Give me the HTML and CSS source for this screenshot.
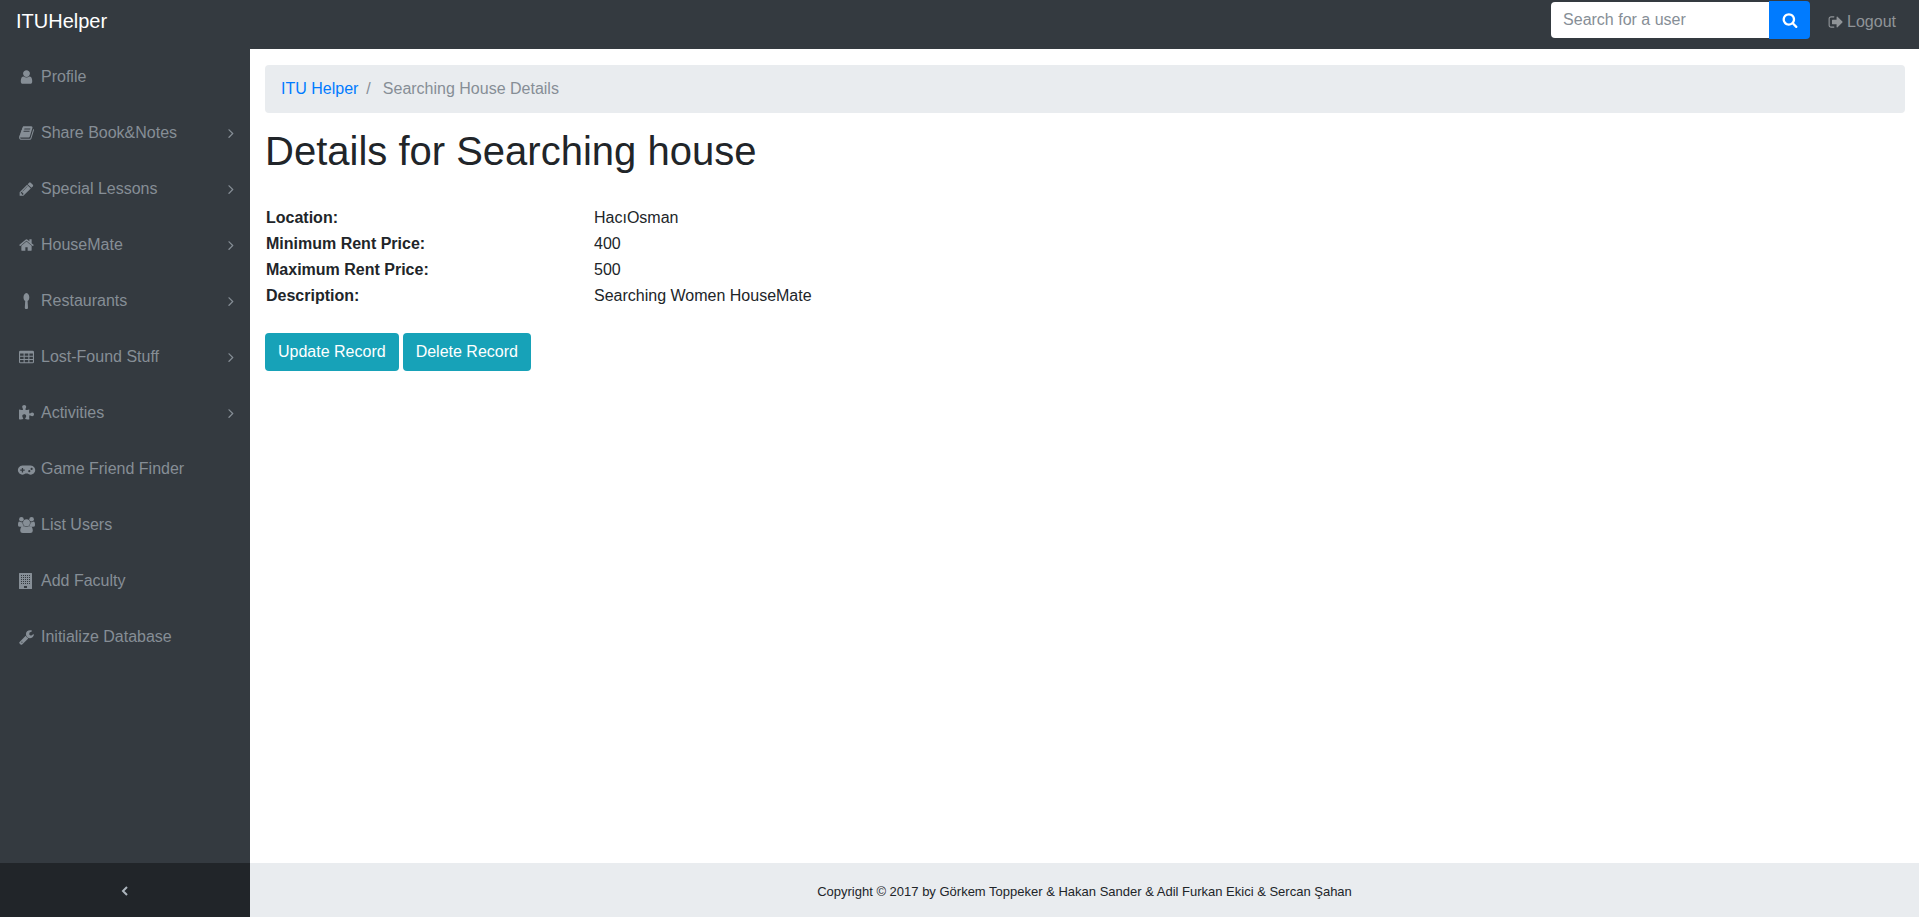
FILE: index.html
```html
<!DOCTYPE html>
<html lang="en">
<head>
<meta charset="utf-8">
<meta name="viewport" content="width=device-width, initial-scale=1">
<title>ITUHelper - Searching House Details</title>
<link rel="stylesheet" href="styles.css">
</head>
<body>
<svg class="sprite" aria-hidden="true">
  <symbol id="angle-right" viewBox="0 0 1792 1792"><path d="M1171 960q0 13-10 23l-466 466q-10 10-23 10t-23-10l-50-50q-10-10-10-23t10-23l393-393-393-393q-10-10-10-23t10-23l50-50q10-10 23-10t23 10l466 466q10 10 10 23z"/></symbol>
</svg>

<header class="navbar">
  <a class="brand" href="#">ITUHelper</a>
  <div class="navbar-right">
    <form class="search">
      <input class="search-input" type="text" placeholder="Search for a user" aria-label="Search for a user">
      <button class="search-button" type="button" aria-label="Search">
        <svg class="icon" viewBox="0 0 1792 1792"><path d="M1216 832q0-185-131.5-316.5t-316.5-131.5-316.5 131.5-131.5 316.5 131.5 316.5 316.5 131.5 316.5-131.5 131.5-316.5zm512 832q0 52-38 90t-90 38q-54 0-90-38l-343-342q-179 124-399 124-143 0-273.5-55.5t-225-150-150-225-55.5-273.5 55.5-273.5 150-225 225-150 273.5-55.5 273.5 55.5 225 150 150 225 55.5 273.5q0 220-124 399l343 343q37 37 37 90z"/></svg>
      </button>
    </form>
    <a class="logout" href="#">
      <svg class="icon" viewBox="0 0 1792 1792"><path d="M704 1440q0 4 1 20t.5 26.5-3 23.5-10 19.5-20.5 6.5h-320q-119 0-203.5-84.5t-84.5-203.5v-704q0-119 84.5-203.5t203.5-84.5h320q13 0 22.5 9.5t9.5 22.5q0 4 1 20t.5 26.5-3 23.5-10 19.5-20.5 6.5h-320q-66 0-113 47t-47 113v704q0 66 47 113t113 47h312l11.5 1 11.5 3 8 5.5 7 9 2 13.5zm928-544q0 26-19 45l-544 544q-19 19-45 19t-45-19-19-45v-288h-448q-26 0-45-19t-19-45v-384q0-26 19-45t45-19h448v-288q0-26 19-45t45-19 45 19l544 544q19 19 19 45z"/></svg>
      <span>Logout</span>
    </a>
  </div>
</header>

<div class="layout">
  <nav class="sidebar" aria-label="Main">
    <ul class="side-list">
      <li><a class="side-link" href="#">
        <svg class="side-icon" viewBox="0 0 1792 1792"><path d="M1536 1399q0 109-62.5 187t-150.5 78h-854q-88 0-150.5-78t-62.5-187q0-85 8.5-160.5t31.5-152 58.5-131 94-89 134.5-34.5q131 128 313 128t313-128q76 0 134.5 34.5t94 89 58.5 131 31.5 152 8.5 160.5zm-256-887q0 159-112.5 271.5t-271.5 112.5-271.5-112.5-112.5-271.5 112.5-271.5 271.5-112.5 271.5 112.5 112.5 271.5z"/></svg>
        <span>Profile</span></a></li>
      <li><a class="side-link" href="#">
        <svg class="side-icon" viewBox="0 0 1792 1792"><path d="M1703 478q40 57 18 129l-275 906q-19 64-76.5 107.5t-122.5 43.5h-923q-77 0-148.5-53.5t-99.5-131.5q-24-67-2-127 0-4 3-27t4-37q1-8-3-21.5t-3-19.5q2-11 8-21t16.5-23.5 16.5-23.5q23-38 45-91.5t30-91.5q3-10 .5-30t-.5-28q3-11 17-28t17-23q21-36 42-92t25-90q1-9-2.5-32t.5-28q4-13 22-30.5t22-22.5q19-26 42.5-84.5t27.5-96.5q1-8-3-25.5t-2-26.5q2-8 9-18t18-23 17-21q8-12 16.5-30.5t15-35 16-36 19.5-32 26.5-23.5 36-11.5 47.5 5.5l-1 3q38-9 51-9h761q74 0 114 56t18 130l-274 906q-36 119-71.5 153.5t-128.5 34.5h-869q-27 0-38 15-11 16-1 43 24 70 144 70h923q29 0 56-15.5t35-41.5l300-987q7-22 5-57 38 15 59 43zm-1064 2q-4 13 2 22.5t20 9.5h608q13 0 25.5-9.5t16.5-22.5l21-64q4-13-2-22.5t-20-9.5h-608q-13 0-25.5 9.5t-16.5 22.5zm-83 256q-4 13 2 22.5t20 9.5h608q13 0 25.5-9.5t16.5-22.5l21-64q4-13-2-22.5t-20-9.5h-608q-13 0-25.5 9.5t-16.5 22.5z"/></svg>
        <span>Share Book&amp;Notes</span><svg class="arrow"><use href="#angle-right"/></svg></a></li>
      <li><a class="side-link" href="#">
        <svg class="side-icon" viewBox="0 0 1792 1792"><path d="M491 1536l91-91-235-235-91 91v107h128v128h107zm523-928q0-22-22-22-10 0-17 7l-542 542q-7 7-7 17 0 22 22 22 10 0 17-7l542-542q7-7 7-17zm-54-192l416 416-832 832h-416v-416zm683 96q0 53-37 90l-166 166-416-416 166-165q36-38 90-38 53 0 91 38l235 234q37 39 37 91z"/></svg>
        <span>Special Lessons</span><svg class="arrow"><use href="#angle-right"/></svg></a></li>
      <li><a class="side-link" href="#">
        <svg class="side-icon" viewBox="0 0 1792 1792"><path d="M1472 992v480q0 26-19 45t-45 19h-384v-384h-256v384h-384q-26 0-45-19t-19-45v-480q0-1 .5-3t.5-3l575-474 575 474q1 2 1 6zm223-69l-62 74q-8 9-21 11h-3q-13 0-21-7l-692-577-692 577q-12 8-24 7-13-2-21-11l-62-74q-8-10-7-23.5t11-21.5l719-599q32-26 76-26t76 26l244 204v-195q0-14 9-23t23-9h192q14 0 23 9t9 23v408l219 182q10 8 11 21.5t-7 23.5z"/></svg>
        <span>HouseMate</span><svg class="arrow"><use href="#angle-right"/></svg></a></li>
      <li><a class="side-link" href="#">
        <svg class="side-icon" viewBox="0 0 21 16"><path d="M10.400 0C12.200 0 13.300 2.300 13.300 4.300C13.300 6.300 12.600 7.500 11.600 8L12 14.800Q12 16 10.900 16H9.900Q8.800 16 8.800 14.800L9.200 8C8.200 7.500 7.500 6.300 7.500 4.300C7.500 2.300 8.600 0 10.400 0Z"/></svg>
        <span>Restaurants</span><svg class="arrow"><use href="#angle-right"/></svg></a></li>
      <li><a class="side-link" href="#">
        <svg class="side-icon" viewBox="0 0 21 16"><path fill-rule="evenodd" d="M4.400 1.700H16.600Q18 1.700 18 3.100V12.900Q18 14.300 16.600 14.300H4.400Q3 14.300 3 12.900V3.100Q3 1.700 4.400 1.700ZM4.100 4.500V6.700H7.600V4.500ZM8.700 4.500V6.700H12.300V4.500ZM13.400 4.500V6.700H16.900V4.500ZM4.100 7.800V9.900H7.600V7.800ZM8.700 7.800V9.900H12.300V7.800ZM13.400 7.800V9.900H16.900V7.800ZM4.100 11V13.200H7.600V11ZM8.700 11V13.200H12.300V11ZM13.400 11V13.200H16.900V11Z"/></svg>
        <span>Lost-Found Stuff</span><svg class="arrow"><use href="#angle-right"/></svg></a></li>
      <li><a class="side-link" href="#">
        <svg class="side-icon" viewBox="0 0 21 16"><path d="M3 4.600Q5.500 5.100 7 4.700C7.600 4.300 6.200 3.200 6.200 2C6.200 .8 7.100 .1 8.200 .1C9.300 .1 10.200 .8 10.200 2C10.200 3.200 8.900 4.100 9.600 4.700Q11.200 5.100 13.300 4.600Q12.900 7 13.400 8.300C14 9 14.900 7.400 16.200 7.400C17.400 7.400 18 8.300 18 9.300C18 10.400 17.300 11.300 16.200 11.300C15 11.300 14 9.800 13.400 10.500Q12.900 12.200 13.400 14.200Q11.200 14.700 9.300 14C8.700 13.400 10.300 12.300 10.200 11C10.100 9.800 9.300 9.200 8.200 9.200C7.100 9.200 6.300 9.900 6.300 11C6.300 12.300 7.600 13.300 7.200 14Q5.300 14.700 3 14.200Z"/></svg>
        <span>Activities</span><svg class="arrow"><use href="#angle-right"/></svg></a></li>
      <li><a class="side-link" href="#">
        <svg class="side-icon" viewBox="0 0 21 16"><path fill-rule="evenodd" d="M6.500 4.600H14.600A4.570 4.570 0 1 1 11.600 12.600H9.500A4.570 4.570 0 1 1 6.500 4.600ZM5.800 6.900V8.500H4.200V9.800H5.800V11.400H7.100V9.800H8.700V8.500H7.100V6.900ZM13.300 9.100A1.100 1.100 0 1 0 13.300 11.300A1.100 1.100 0 1 0 13.300 9.100ZM15.600 6.800A1.100 1.100 0 1 0 15.600 9A1.100 1.100 0 1 0 15.600 6.800Z"/></svg>
        <span>Game Friend Finder</span></a></li>
      <li><a class="side-link" href="#">
        <svg class="side-icon" viewBox="0 0 21 16"><circle cx="10.500" cy="5.700" r="3.500"/><circle cx="5.400" cy="2.300" r="2.300"/><circle cx="15.600" cy="2.300" r="2.300"/><path d="M6.500 4.900Q6.200 7.600 7.800 9.100Q6.400 9.100 5.500 9.700H4Q2 9.700 2 8.200Q2 4.600 3.300 4.600Q5 5.600 6.500 4.900ZM14.500 4.900Q14.800 7.600 13.200 9.100Q14.600 9.100 15.500 9.700H17Q19 9.700 19 8.200Q19 4.600 17.700 4.600Q16 5.600 14.500 4.900ZM7.600 9Q10.500 10.600 13.400 9Q16.800 9 16.800 13.700Q16.800 16 14.300 16H6.700Q4.200 16 4.200 13.700Q4.200 9 7.600 9Z"/></svg>
        <span>List Users</span></a></li>
      <li><a class="side-link" href="#">
        <svg class="side-icon" viewBox="0 0 21 16"><path fill-rule="evenodd" d="M3.500 0H15.500Q16 0 16 .6V15.400Q16 16 15.500 16H3.500Q3 16 3 15.400V.6Q3 0 3.500 0ZM8 13V15H11V13Z"/><path class="windows" d="M5 2.500H14M5 4.500H14M5 6.500H14M5 8.500H14M5 10.500H14"/></svg>
        <span>Add Faculty</span></a></li>
      <li><a class="side-link" href="#">
        <svg class="side-icon" viewBox="0 0 1792 1792"><path d="M448 1472q0-26-19-45t-45-19-45 19-19 45 19 45 45 19 45-19 19-45zm644-420l-682 682q-37 37-90 37-52 0-91-37l-106-108q-38-36-38-90 0-53 38-91l681-681q39 98 114.500 173.500t173.500 114.500zm634-435q0 39-23 106-47 134-164.500 217.500t-258.500 83.500q-185 0-316.500-131.500t-131.500-316.500 131.500-316.500 316.500-131.500q58 0 121.500 16.500t107.500 46.500q16 11 16 28t-16 28l-293 169v224l193 107q5-3 79-48.500t135.500-81 70.500-35.500q15 0 23.500 10t8.500 25z"/></svg>
        <span>Initialize Database</span></a></li>
    </ul>
    <button class="side-toggle" type="button" aria-label="Collapse sidebar">
      <svg class="icon" viewBox="0 0 16 16"><path class="chevron" d="M10 4L6 8L10 12"/></svg>
    </button>
  </nav>

  <div class="page">
    <main class="content">
      <ol class="breadcrumb">
        <li><a href="#">ITU Helper</a></li>
        <li class="current">Searching House Details</li>
      </ol>
      <h1>Details for Searching house</h1>
      <table class="details">
        <tr><th scope="row">Location:</th><td>HacıOsman</td></tr>
        <tr><th scope="row">Minimum Rent Price:</th><td>400</td></tr>
        <tr><th scope="row">Maximum Rent Price:</th><td>500</td></tr>
        <tr><th scope="row">Description:</th><td>Searching Women HouseMate</td></tr>
      </table>
      <div class="actions">
        <button class="button" type="button">Update Record</button>
        <button class="button" type="button">Delete Record</button>
      </div>
    </main>
    <footer class="footer">Copyright © 2017 by Görkem Toppeker &amp; Hakan Sander &amp; Adil Furkan Ekici &amp; Sercan Şahan</footer>
  </div>
</div>
</body>
</html>
```

FILE: styles.css
```css
*,
*::before {
  box-sizing: border-box;
}

body {
  display: flex;
  flex-direction: column;
  min-height: 100vh;
  margin: 0;
  background: #fff;
  color: #212529;
  font: 16px/24px "Liberation Sans", Arial, sans-serif;
}

a {
  text-decoration: none;
}

button,
input {
  font: inherit;
}

button {
  cursor: pointer;
}

svg {
  flex: none;
  fill: currentColor;
}

.sprite {
  position: absolute;
  width: 0;
  height: 0;
}

.icon {
  width: 16px;
  height: 16px;
}

/* Top bar */
.navbar {
  display: flex;
  align-items: flex-start;
  justify-content: space-between;
  height: 49px;
  padding: 1px 15px 0 16px;
  background: #343a40;
}

.brand {
  color: #fff;
  font-size: 20px;
  line-height: 40px;
}

.navbar-right {
  display: flex;
  align-items: flex-start;
}

.search {
  display: flex;
  align-items: center;
}

.search-input {
  width: 218px;
  height: 36px;
  padding: 0 12px;
  border: 0;
  border-radius: 4px 0 0 4px;
  background: #fff;
  color: #495057;
}

.search-input::placeholder {
  color: #868e96;
  opacity: 1;
}

.search-button {
  display: flex;
  align-items: center;
  justify-content: center;
  width: 41px;
  height: 38px;
  padding: 0;
  border: 0;
  border-radius: 0 4px 4px 0;
  background: #007bff;
  color: #fff;
}

.logout {
  display: flex;
  align-items: center;
  gap: 3px;
  padding: 9px 8px 7px 18px;
  color: #909498;
}

/* Sidebar */
.layout {
  display: flex;
  flex: 1;
}

.sidebar {
  display: flex;
  flex: none;
  flex-direction: column;
  justify-content: space-between;
  width: 250px;
  background: #343a40;
}

.side-list {
  margin: 0;
  padding: 0;
  list-style: none;
}

.side-link {
  display: flex;
  align-items: center;
  padding: 16px;
  color: #868e96;
}

.side-icon {
  width: 21px;
  height: 16px;
  margin-right: 4px;
}

.windows {
  fill: none;
  stroke: #343a40;
  stroke-width: 1;
  stroke-dasharray: 1 1;
}

.arrow {
  width: 16px;
  height: 16px;
  margin-left: auto;
  margin-right: -5px;
}

.side-toggle {
  display: flex;
  align-items: center;
  justify-content: center;
  height: 54px;
  padding: 2px 0 0;
  border: 0;
  background: #212529;
  color: #adb5bd;
}

.chevron {
  fill: none;
  stroke: currentColor;
  stroke-width: 2;
}

/* Page */
.page {
  display: flex;
  flex: 1;
  flex-direction: column;
  min-width: 0;
}

.content {
  flex: 1;
  padding: 16px 14px 16px 15px;
}

.breadcrumb {
  display: flex;
  margin: 0 0 16px;
  padding: 12px 16px;
  border-radius: 4px;
  background: #e9ecef;
  list-style: none;
}

.breadcrumb a {
  color: #007bff;
}

.current {
  color: #868e96;
}

.current::before {
  content: "/";
  padding: 0 12px 0 8px;
}

h1 {
  margin: 0 0 32px;
  font-size: 40px;
  font-weight: 400;
  line-height: 44px;
}

.details {
  width: 100%;
  border-collapse: collapse;
}

.details th,
.details td {
  padding: 1px;
  text-align: left;
}

.details th {
  width: 20%;
}

.actions {
  display: flex;
  gap: 4px;
  margin-top: 24px;
}

.button {
  padding: 7px 13px;
  border: 0;
  border-radius: 4px;
  background: #17a2b8;
  color: #fff;
}

.footer {
  padding: 17px 16px 13px;
  background: #e9ecef;
  font-size: 13px;
  text-align: center;
}
```
